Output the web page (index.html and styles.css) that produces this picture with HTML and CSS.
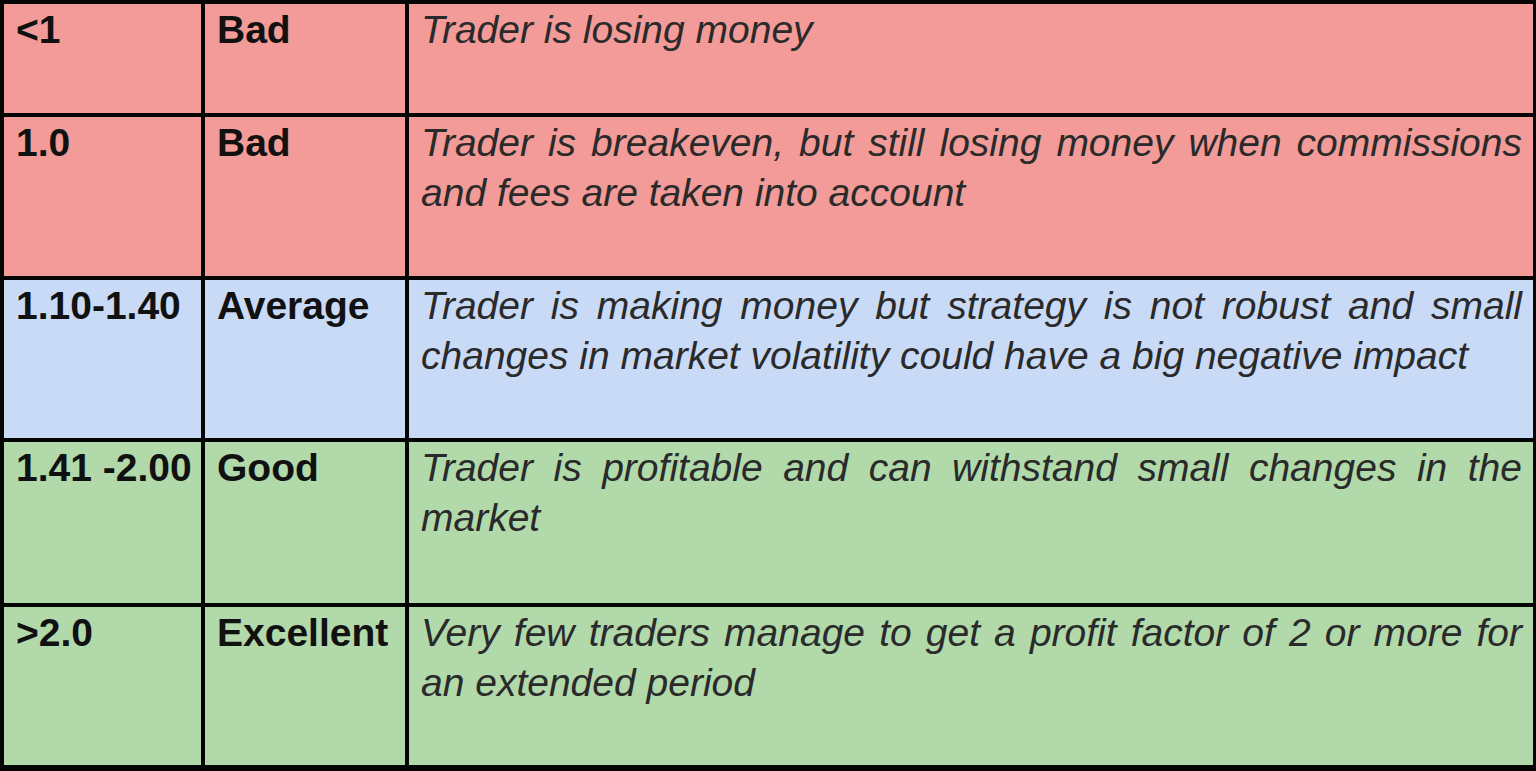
FILE: index.html
```html
<!DOCTYPE html>
<html>
<head>
<meta charset="utf-8">
<link rel="stylesheet" href="styles.css">
</head>
<body>
<div class="table">
  <div class="cell red val">&lt;1</div>
  <div class="cell red val">Bad</div>
  <div class="cell red desc">Trader is losing money</div>

  <div class="cell red val">1.0</div>
  <div class="cell red val">Bad</div>
  <div class="cell red desc">Trader is breakeven, but still losing money when commissions and fees are taken into account</div>

  <div class="cell blue val">1.10-1.40</div>
  <div class="cell blue val">Average</div>
  <div class="cell blue desc">Trader is making money but strategy is not robust and small changes in market volatility could have a big negative impact</div>

  <div class="cell green val">1.41 -2.00</div>
  <div class="cell green val">Good</div>
  <div class="cell green desc">Trader is profitable and can withstand small changes in the market</div>

  <div class="cell green val">&gt;2.0</div>
  <div class="cell green val">Excellent</div>
  <div class="cell green desc">Very few traders manage to get a profit factor of 2 or more for an extended period</div>
</div>
</body>
</html>
```

FILE: styles.css
```css
html, body {
  margin: 0;
  padding: 0;
  background: #000;
}
body {
  width: 1536px;
  height: 771px;
  overflow: hidden;
}
.table {
  box-sizing: border-box;
  width: 1536px;
  height: 771px;
  background: #050505;
  padding: 4px 3px 6px 4px;
  display: grid;
  grid-template-columns: 197px 200px 1124px;
  grid-template-rows: 109px 159px 158px 161px 158px;
  column-gap: 4px;
  row-gap: 4px;
  font-family: "Liberation Sans", Arial, sans-serif;
  font-size: 39px;
  line-height: 50px;
}
.cell {
  padding: 1px 12px 0 12px;
  overflow: hidden;
}
.red { background: #f29b98; }
.blue { background: #c9daf7; }
.green { background: #b1d9aa; }
.val {
  font-weight: bold;
  color: #111;
  white-space: nowrap;
  padding-right: 0;
}
.desc {
  font-style: italic;
  color: #2a2a2a;
  text-align: justify;
  padding-right: 11px;
}
```
